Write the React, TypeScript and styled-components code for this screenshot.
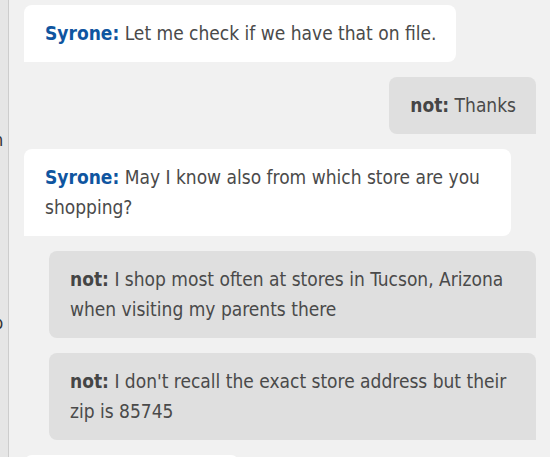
import * as React from 'react';
import styled, { createGlobalStyle } from 'styled-components';

const GlobalStyle = createGlobalStyle`
  html, body {
    margin: 0;
    padding: 0;
    background: #f1f1f1;
  }
  body {
    font-family: 'DejaVu Sans', Tahoma, sans-serif;
    font-stretch: condensed;
  }
`;

type Message = {
  from: 'agent' | 'user';
  name: string;
  text: string;
};

const messages: Message[] = [
  { from: 'agent', name: 'Syrone', text: 'Let me check if we have that on file.' },
  { from: 'user', name: 'not', text: 'Thanks' },
  { from: 'agent', name: 'Syrone', text: 'May I know also from which store are you shopping?' },
  { from: 'user', name: 'not', text: 'I shop most often at stores in Tucson, Arizona when visiting my parents there' },
  { from: 'user', name: 'not', text: "I don't recall the exact store address but their zip is 85745" },
  { from: 'agent', name: 'Syrone', text: 'Thank you.' },
];

const Page = styled.div`
  display: flex;
  height: 457px;
  overflow: hidden;
`;

// edge of the neighbouring panel, only a few pixels of it show
const SidePanel = styled.div`
  width: 8px;
  flex-shrink: 0;
  overflow: hidden;
  background: #e6e6e6;
  border-right: 1px solid #cdcdcd;
  padding-top: 129px;
  display: flex;
  flex-direction: column;
  gap: 39px;
  color: #333;
  font-size: 18px;
  line-height: 22px;
`;

const SideGlyph = styled.span`
  display: block;
  margin-left: -7px;
  white-space: nowrap;
`;

const ChatPanel = styled.div`
  flex: 1;
  display: flex;
  flex-direction: column;
  gap: 15px;
  padding: 5px 14px 0 15px;
`;

const Bubble = styled.div<{ $from: 'agent' | 'user' }>`
  align-self: ${(p) => (p.$from === 'agent' ? 'flex-start' : 'flex-end')};
  max-width: 487px;
  box-sizing: border-box;
  padding: 13px 20px 14px 21px;
  background: ${(p) => (p.$from === 'agent' ? '#ffffff' : '#dfdfdf')};
  border-radius: ${(p) => (p.$from === 'agent' ? '8px 8px 8px 0' : '8px 8px 0 8px')};
  color: #4a4a4a;
  font-size: 19px;
  line-height: 30px;
`;

const Name = styled.b<{ $from: 'agent' | 'user' }>`
  font-weight: bold;
  color: ${(p) => (p.$from === 'agent' ? '#0f55a0' : '#454545')};
`;

export default function App() {
  return (
    <>
      <GlobalStyle />
      <Page>
        <SidePanel>
          <SideGlyph>n</SideGlyph>
          <SideGlyph>(</SideGlyph>
          <SideGlyph>.</SideGlyph>
          <SideGlyph>p</SideGlyph>
        </SidePanel>
        <ChatPanel>
          {messages.map((m, i) => (
            <Bubble key={i} $from={m.from}>
              <Name $from={m.from}>{m.name}:</Name> {m.text}
            </Bubble>
          ))}
        </ChatPanel>
      </Page>
    </>
  );
}
